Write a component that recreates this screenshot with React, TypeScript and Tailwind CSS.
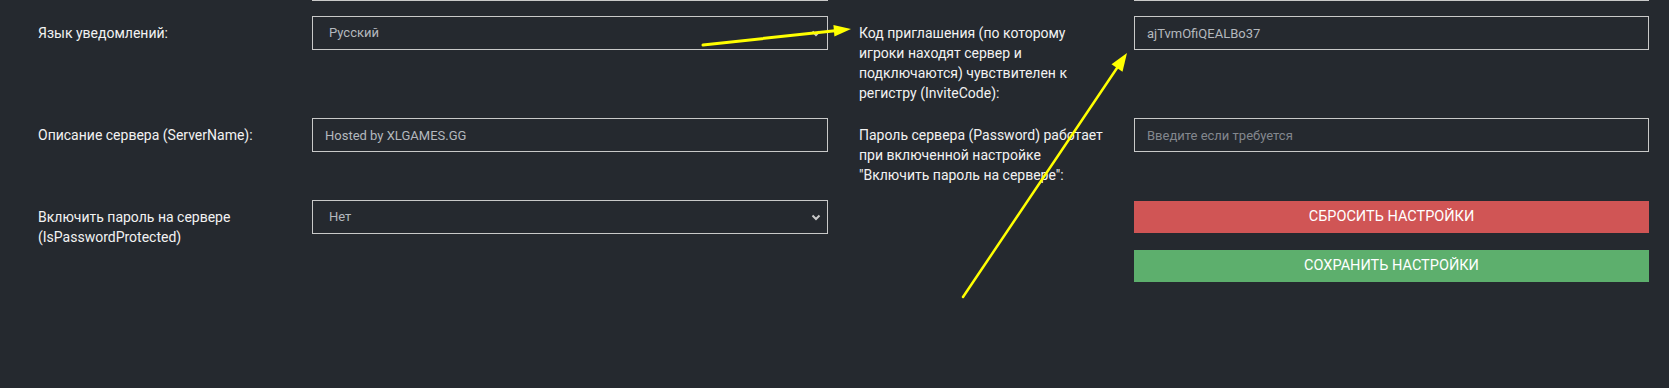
import React from 'react';

const labelLeft = 'pt-[7px] pr-[29px] text-[14px] leading-5 text-[#f2f2f2]';
const labelRight = 'pt-[7px] pl-[31px] pr-[30px] text-[14px] leading-5 text-[#f2f2f2]';
const field =
  'w-full h-[34px] border border-[#c9c9c9] bg-transparent px-3 text-[13px] text-[#b4b8be] outline-none placeholder:text-[#83878e]';

function Select({ value, options }: { value: string; options: string[] }) {
  return (
    <div className="relative">
      <select defaultValue={value} className={field + ' appearance-none pl-4'}>
        {options.map((o) => (
          <option key={o} value={o} className="bg-[#25292f]">
            {o}
          </option>
        ))}
      </select>
      <svg
        className="pointer-events-none absolute right-[7px] top-[14px]"
        width="10"
        height="7"
        viewBox="0 0 10 7"
      >
        <path d="M1.5 1.5 L5 5 L8.5 1.5" fill="none" stroke="#c9c9c9" strokeWidth="2" />
      </svg>
    </div>
  );
}

export default function App() {
  return (
    <div
      className="relative min-h-screen bg-[#25292f]"
      style={{ fontFamily: 'Roboto, "Noto Sans", sans-serif' }}
    >
      <div className="grid grid-cols-[274px_516px_306px_515px] gap-y-[15px] pl-[38px]">
        {/* tail of the previous row */}
        <div />
        <div className="h-px bg-[#c9c9c9]" />
        <div />
        <div className="h-px bg-[#c9c9c9]" />

        <div className={labelLeft}>Язык уведомлений:</div>
        <Select value="Русский" options={['Русский', 'English']} />
        <div className={labelRight}>
          Код приглашения (по которому игроки находят сервер и подключаются) чувствителен к регистру (InviteCode):
        </div>
        <div>
          <input className={field} defaultValue="ajTvmOfiQEALBo37" />
        </div>

        <div className={labelLeft}>Описание сервера (ServerName):</div>
        <div>
          <input className={field} defaultValue="Hosted by XLGAMES.GG" />
        </div>
        <div className={labelRight}>
          Пароль сервера (Password) работает при включенной настройке "Включить пароль на сервере":
        </div>
        <div>
          <input className={field} placeholder="Введите если требуется" />
        </div>

        <div className={labelLeft}>Включить пароль на сервере (IsPasswordProtected)</div>
        <Select value="Нет" options={['Нет', 'Да']} />
        <div />
        <div className="flex flex-col gap-[17px] pt-px">
          <button className="h-8 w-full bg-[#d05555] text-[14.5px] text-white uppercase">
            Сбросить настройки
          </button>
          <button className="h-8 w-full bg-[#5daf6d] text-[14.5px] text-white uppercase">
            Сохранить настройки
          </button>
        </div>
      </div>

      {/* annotation arrows drawn over the form */}
      <svg className="pointer-events-none absolute inset-0 h-full w-full">
        <line x1="703" y1="45" x2="835" y2="30.7" stroke="#ffff00" strokeWidth="3" strokeLinecap="round" />
        <polygon points="851,29 834.4,36.5 833.4,24.9" fill="#ffff00" />
        <line x1="963" y1="297" x2="1117" y2="68" stroke="#ffff00" strokeWidth="2.5" strokeLinecap="round" />
        <polygon points="1127,53 1122.5,71.8 1111.5,64.2" fill="#ffff00" />
      </svg>
    </div>
  );
}
